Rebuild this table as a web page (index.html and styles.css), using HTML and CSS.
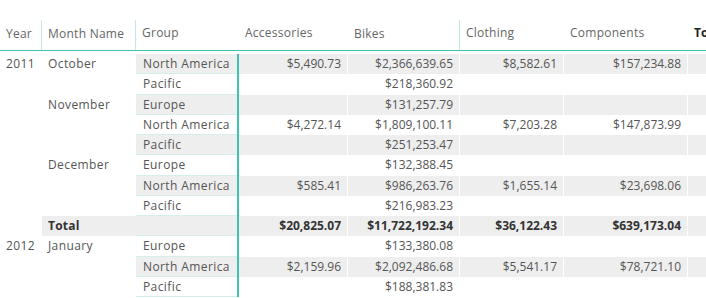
FILE: index.html
```html
<!DOCTYPE html>
<html>
<head>
<meta charset="utf-8">
<link rel="stylesheet" href="styles.css">
</head>
<body>
<div class="matrix">
  <div class="row head">
    <div class="c t sep">Year</div>
    <div class="c t sep">Month Name</div>
    <div class="c t">Group</div>
    <div class="c gap"></div>
    <div class="c t">Accessories</div>
    <div class="c t sep">Bikes</div>
    <div class="c t">Clothing</div>
    <div class="c t">Components</div>
    <div class="c tot">Total</div>
  </div>
  <div class="body">
    <div class="row b">
      <div class="c t">2011</div><div class="c t">October</div><div class="c t g">North America</div><div class="c gap"></div>
      <div class="c n">$5,490.73</div><div class="c n">$2,366,639.65</div><div class="c n">$8,582.61</div><div class="c n">$157,234.88</div><div class="c n"></div>
    </div>
    <div class="row">
      <div class="c"></div><div class="c"></div><div class="c t g">Pacific</div><div class="c gap"></div>
      <div class="c n"></div><div class="c n">$218,360.92</div><div class="c n"></div><div class="c n"></div><div class="c n"></div>
    </div>
    <div class="row b">
      <div class="c"></div><div class="c t">November</div><div class="c t g">Europe</div><div class="c gap"></div>
      <div class="c n"></div><div class="c n">$131,257.79</div><div class="c n"></div><div class="c n"></div><div class="c n"></div>
    </div>
    <div class="row">
      <div class="c"></div><div class="c"></div><div class="c t g">North America</div><div class="c gap"></div>
      <div class="c n">$4,272.14</div><div class="c n">$1,809,100.11</div><div class="c n">$7,203.28</div><div class="c n">$147,873.99</div><div class="c n"></div>
    </div>
    <div class="row b">
      <div class="c"></div><div class="c"></div><div class="c t g">Pacific</div><div class="c gap"></div>
      <div class="c n"></div><div class="c n">$251,253.47</div><div class="c n"></div><div class="c n"></div><div class="c n"></div>
    </div>
    <div class="row">
      <div class="c"></div><div class="c t">December</div><div class="c t g">Europe</div><div class="c gap"></div>
      <div class="c n"></div><div class="c n">$132,388.45</div><div class="c n"></div><div class="c n"></div><div class="c n"></div>
    </div>
    <div class="row b">
      <div class="c"></div><div class="c"></div><div class="c t g">North America</div><div class="c gap"></div>
      <div class="c n">$585.41</div><div class="c n">$986,263.76</div><div class="c n">$1,655.14</div><div class="c n">$23,698.06</div><div class="c n"></div>
    </div>
    <div class="row">
      <div class="c"></div><div class="c"></div><div class="c t g">Pacific</div><div class="c gap"></div>
      <div class="c n"></div><div class="c n">$216,983.23</div><div class="c n"></div><div class="c n"></div><div class="c n"></div>
    </div>
    <div class="row b total">
      <div class="c nob"></div><div class="c t">Total</div><div class="c g"></div><div class="c gap"></div>
      <div class="c n">$20,825.07</div><div class="c n">$11,722,192.34</div><div class="c n">$36,122.43</div><div class="c n">$639,173.04</div><div class="c n"></div>
    </div>
    <div class="row">
      <div class="c t">2012</div><div class="c t">January</div><div class="c t g">Europe</div><div class="c gap"></div>
      <div class="c n"></div><div class="c n">$133,380.08</div><div class="c n"></div><div class="c n"></div><div class="c n"></div>
    </div>
    <div class="row b">
      <div class="c"></div><div class="c"></div><div class="c t g">North America</div><div class="c gap"></div>
      <div class="c n">$2,159.96</div><div class="c n">$2,092,486.68</div><div class="c n">$5,541.17</div><div class="c n">$78,721.10</div><div class="c n"></div>
    </div>
    <div class="row">
      <div class="c"></div><div class="c"></div><div class="c t g">Pacific</div><div class="c gap"></div>
      <div class="c n"></div><div class="c n">$188,381.83</div><div class="c n"></div><div class="c n"></div><div class="c n"></div>
    </div>
  </div>
</div>
</body>
</html>
```
FILE: styles.css
```css
html, body {
  margin: 0;
  padding: 0;
  background: #ffffff;
  overflow: hidden;
}
body {
  font-family: "Open Sans", "Noto Sans", sans-serif;
  font-size: 12px;
  color: #555555;
  width: 706px;
  height: 298px;
}
.matrix {
  padding-top: 18px;
  width: 740px;
}
.row {
  display: grid;
  grid-template-columns: 42px 94px 101px 2px 109px 112px 104px 124px 52px;
  height: 20.25px;
  line-height: 20px;
}
.c {
  padding: 0 6px;
  white-space: nowrap;
  overflow: hidden;
}
.c.t {
  letter-spacing: 0.4px;
}
.head {
  height: 32px;
  line-height: 29px;
  color: #666666;
  border-bottom: 1px solid #3fc1b5;
  margin-bottom: 3px;
}
.head .c.t {
  letter-spacing: 0.25px;
}
.head .sep {
  border-right: 1px solid #c4e9e5;
  margin-top: 2px;
  line-height: 27px;
}
.head .tot {
  color: #222222;
  font-weight: 700;
}
.c.gap {
  padding: 0;
}
.body .c.gap {
  background: #3fc1b5;
}
.c.g {
  padding-left: 7px;
  border-bottom: 1px solid #d4efec;
  line-height: 19px;
}
.c.n {
  text-align: right;
  border-right: 1px solid #ffffff;
}
.row.b .c.g,
.row.b .c.n {
  background: #eeeeee;
}
.row.total .c {
  background: #eeeeee;
  font-weight: 700;
  color: #333333;
}
.row.total .c.t {
  letter-spacing: 0.2px;
}
.row.total .c.nob {
  background: #ffffff;
}
.row.total .c.gap {
  background: #3fc1b5;
}
```
